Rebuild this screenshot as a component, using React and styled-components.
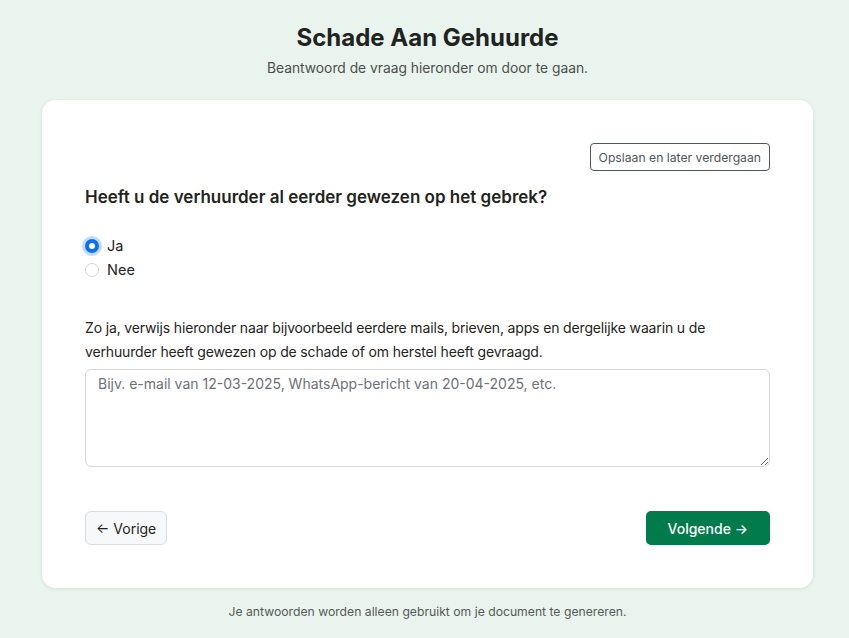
import styled, { createGlobalStyle } from 'styled-components';

const GlobalStyle = createGlobalStyle`
  body {
    margin: 0;
    background: #eaf4ee;
    font-family: Inter, "Noto Sans", "Liberation Sans", sans-serif;
    color: #212529;
  }
`;

const App = () => {
  return (
    <Page>
      <GlobalStyle />
      <Header>
        <Title>Schade Aan Gehuurde</Title>
        <Subtitle>Beantwoord de vraag hieronder om door te gaan.</Subtitle>
      </Header>

      <Card>
        <TopBar>
          <SaveButton type="button">Opslaan en later verdergaan</SaveButton>
        </TopBar>

        <Question>Heeft u de verhuurder al eerder gewezen op het gebrek?</Question>

        <Options>
          <Option>
            <Radio $checked />
            Ja
          </Option>
          <Option>
            <Radio />
            Nee
          </Option>
        </Options>

        <Explain>
          Zo ja, verwijs hieronder naar bijvoorbeeld eerdere mails, brieven, apps en dergelijke waarin u de
          verhuurder heeft gewezen op de schade of om herstel heeft gevraagd.
        </Explain>
        <TextArea placeholder="Bijv. e-mail van 12-03-2025, WhatsApp-bericht van 20-04-2025, etc." />

        <Nav>
          <BackButton type="button">← Vorige</BackButton>
          <NextButton type="button">Volgende →</NextButton>
        </Nav>
      </Card>

      <Footer>Je antwoorden worden alleen gebruikt om je document te genereren.</Footer>
    </Page>
  );
};

const Page = styled.div`
  display: flex;
  flex-direction: column;
  align-items: center;
  padding: 23px 36px 0 42px;
`;

const Header = styled.header`
  text-align: center;
  margin-bottom: 23px;
`;

const Title = styled.h1`
  margin: 0;
  font-size: 24px;
  line-height: 29px;
  font-weight: 700;
  color: #1f2421;
`;

const Subtitle = styled.p`
  margin: 8px 0 0;
  font-size: 13.8px;
  line-height: 17px;
  color: #4a4f4c;
`;

const Card = styled.main`
  box-sizing: border-box;
  width: 771px;
  background: #fff;
  border-radius: 14px;
  box-shadow: 0 1px 4px rgba(0, 0, 0, 0.08);
  padding: 43px 43px 43px;
`;

const TopBar = styled.div`
  display: flex;
  justify-content: flex-end;
`;

const SaveButton = styled.button`
  height: 28px;
  padding: 0 8px;
  background: #fff;
  border: 1px solid #4f555b;
  border-radius: 4px;
  font-family: inherit;
  font-size: 12.2px;
  color: #4f555b;
`;

const Question = styled.h2`
  margin: 15px 0 0;
  font-size: 17px;
  line-height: 22px;
  font-weight: 600;
  color: #1f2421;
`;

const Options = styled.div`
  display: flex;
  flex-direction: column;
  gap: 6px;
  margin-top: 29px;
`;

const Option = styled.label`
  display: flex;
  align-items: center;
  gap: 8px;
  font-size: 14.5px;
  line-height: 18px;
  color: #1f2421;
`;

const Radio = styled.span`
  box-sizing: border-box;
  width: 14px;
  height: 14px;
  border-radius: 50%;
  border: ${p => (p.$checked ? '4px solid #0d6efd' : '1px solid #d3d6d9')};
  background: #fff;
  box-shadow: ${p => (p.$checked ? '0 0 0 3px rgba(13, 110, 253, 0.25)' : 'none')};
`;

const Explain = styled.p`
  margin: 37px 0 0;
  font-size: 14px;
  letter-spacing: -0.15px;
  line-height: 24px;
  color: #1f2421;
`;

const TextArea = styled.textarea`
  display: block;
  box-sizing: border-box;
  width: 100%;
  height: 98px;
  margin-top: 5px;
  padding: 3px 12px;
  border: 1px solid #d6d9dc;
  border-radius: 6px;
  font-family: inherit;
  font-size: 14px;
  line-height: 21px;
  color: #212529;
  resize: vertical;

  &::placeholder {
    color: #6c7177;
  }
`;

const Nav = styled.div`
  display: flex;
  justify-content: space-between;
  margin-top: 44px;
`;

const BackButton = styled.button`
  height: 34px;
  padding: 0 10px;
  background: #f7f8fa;
  border: 1px solid #dadde1;
  border-radius: 6px;
  font-family: inherit;
  font-size: 14px;
  color: #1f2421;
`;

const NextButton = styled.button`
  height: 34px;
  padding: 0 22px;
  background: #017a4c;
  border: none;
  border-radius: 5px;
  font-family: inherit;
  font-size: 14px;
  font-weight: 500;
  color: #fff;
`;

const Footer = styled.p`
  margin: 16px 0 0;
  font-size: 12.2px;
  line-height: 15px;
  color: #555a57;
`;

export default App;
